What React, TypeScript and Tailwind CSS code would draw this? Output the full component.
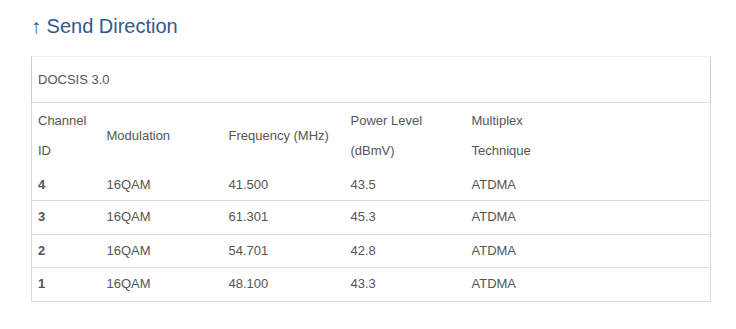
import React from "react";

const rows = [
  { id: "4", mod: "16QAM", freq: "41.500", power: "43.5", mux: "ATDMA" },
  { id: "3", mod: "16QAM", freq: "61.301", power: "45.3", mux: "ATDMA" },
  { id: "2", mod: "16QAM", freq: "54.701", power: "42.8", mux: "ATDMA" },
  { id: "1", mod: "16QAM", freq: "48.100", power: "43.3", mux: "ATDMA" },
];

const rowHeights = ["h-[31px]", "h-[34px]", "h-[33px]", "h-[34px]"];

export default function App() {
  return (
    <div
      className="w-[736px] h-[329px] bg-white pl-[31px] pr-[25px] pt-[12px] text-[#555]"
      style={{ fontFamily: '"Liberation Sans", Arial, sans-serif' }}
    >
      {/* Title */}
      <h2 className="text-[20px] leading-[28px] text-[#2f5a8c] font-normal">
        ↑ Send Direction
      </h2>

      {/* Panel */}
      <div className="mt-[16px] w-[680px]">
        <div className="h-[47px] flex items-center px-[6px] text-[13px] border-t border-t-[#eee] border-x border-x-[#ccc] border-b border-b-[#ddd]">
          DOCSIS 3.0
        </div>

        <table className="w-full border-collapse text-[13px] border-x border-b border-[#ddd]">
          <colgroup>
            <col className="w-[69px]" />
            <col className="w-[122px]" />
            <col className="w-[122px]" />
            <col className="w-[121px]" />
            <col />
          </colgroup>
          <thead>
            <tr className="text-left align-middle">
              <th className="font-normal px-[6px] py-[3px] leading-[30px]">
                Channel
                <br />
                ID
              </th>
              <th className="font-normal px-[6px] py-[3px] leading-[30px]">Modulation</th>
              <th className="font-normal px-[6px] py-[3px] leading-[30px]">Frequency (MHz)</th>
              <th className="font-normal px-[6px] py-[3px] leading-[30px]">
                Power Level
                <br />
                (dBmV)
              </th>
              <th className="font-normal px-[6px] py-[3px] leading-[30px]">
                Multiplex
                <br />
                Technique
              </th>
            </tr>
          </thead>
          <tbody>
            {rows.map((r, i) => (
              <tr key={r.id} className={i < rows.length - 1 ? "border-b border-[#ddd]" : ""}>
                <td className={`px-[6px] font-bold ${rowHeights[i]}`}>{r.id}</td>
                <td className="px-[6px]">{r.mod}</td>
                <td className="px-[6px]">{r.freq}</td>
                <td className="px-[6px]">{r.power}</td>
                <td className="px-[6px]">{r.mux}</td>
              </tr>
            ))}
          </tbody>
        </table>
      </div>
    </div>
  );
}
